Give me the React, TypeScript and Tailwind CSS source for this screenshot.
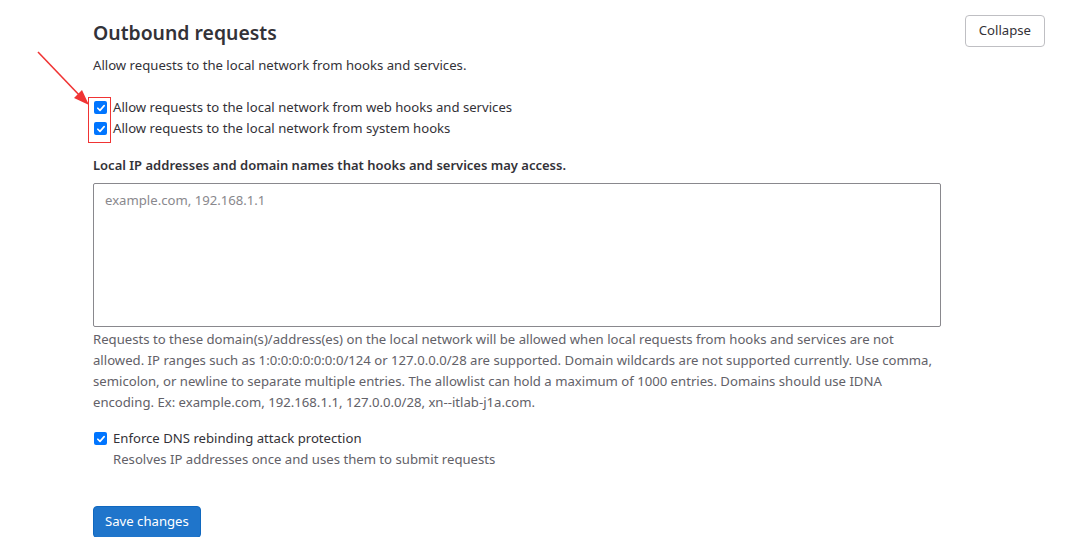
import React from "react";

const font = { fontFamily: '"Noto Sans", "Open Sans", sans-serif' };

function Check({ className = "" }: { className?: string }) {
  return (
    <span className={"inline-flex h-[13px] w-[13px] shrink-0 items-center justify-center rounded-[2px] bg-[#0075ff] " + className}>
      <svg viewBox="0 0 12 12" className="h-[10px] w-[10px]" fill="none">
        <path d="M2.2 6.3 L4.8 8.8 L9.8 3.2" stroke="white" strokeWidth="2" strokeLinecap="round" strokeLinejoin="round" />
      </svg>
    </span>
  );
}

export default function App() {
  return (
    <div className="relative h-[537px] w-[1089px] overflow-hidden bg-white text-[13.15px] text-[#333238]" style={font}>
      {/* annotation arrow */}
      <svg className="pointer-events-none absolute left-0 top-0 z-10" width="120" height="120" viewBox="0 0 120 120">
        <line x1="38" y1="52" x2="82" y2="98" stroke="#f03434" strokeWidth="1.6" />
        <polygon points="89,105 74,98 82,90" fill="#f03434" />
      </svg>
      <div className="pointer-events-none absolute left-[88px] top-[97px] z-10 h-[46px] w-[23px] border border-[#f03434]" />

      <div className="pl-[93px] pr-[44px] pt-[15px]">
        <div className="flex items-start justify-between">
          <h2 className="mt-[6px] text-[19.4px] font-semibold leading-[24px] text-[#333238]">Outbound requests</h2>
          <button className="h-[32px] rounded-[4px] border border-[#bfbfc3] bg-white px-[13px] text-[13.15px] text-[#333238]">
            Collapse
          </button>
        </div>
        <p className="mt-[8px] leading-[20px]">Allow requests to the local network from hooks and services.</p>

        <div className="mt-[22px] flex flex-col">
          <label className="flex h-[21px] items-center gap-[6px] pl-[1px]">
            <Check />
            <span>Allow requests to the local network from web hooks and services</span>
          </label>
          <label className="flex h-[21px] items-center gap-[6px] pl-[1px]">
            <Check />
            <span>Allow requests to the local network from system hooks</span>
          </label>
        </div>

        <div className="mt-[16px] text-[13px] font-semibold leading-[20px]">
          Local IP addresses and domain names that hooks and services may access.
        </div>
        <div className="mt-[8px] h-[144px] w-[848px] rounded-[2px] border border-[#89888d] px-[11px] py-[6px] leading-[20px] text-[#89888d]">
          example.com, 192.168.1.1
        </div>
        <div className="mt-[2px] w-[848px] leading-[21px] text-[#626168]">
          <div className="whitespace-nowrap">Requests to these domain(s)/address(es) on the local network will be allowed when local requests from hooks and services are not</div>
          <div className="whitespace-nowrap">allowed. IP ranges such as 1:0:0:0:0:0:0:0/124 or 127.0.0.0/28 are supported. Domain wildcards are not supported currently. Use comma,</div>
          <div className="whitespace-nowrap">semicolon, or newline to separate multiple entries. The allowlist can hold a maximum of 1000 entries. Domains should use IDNA</div>
          <div className="whitespace-nowrap">encoding. Ex: example.com, 192.168.1.1, 127.0.0.0/28, xn--itlab-j1a.com.</div>
        </div>

        <label className="mt-[15px] flex h-[21px] items-center gap-[6px] pl-[1px]">
          <Check />
          <span>Enforce DNS rebinding attack protection</span>
        </label>
        <div className="pl-[20px] leading-[21px] text-[#626168]">Resolves IP addresses once and uses them to submit requests</div>

        <button className="mt-[36px] h-[32px] rounded-[4px] border border-[#1068bf] bg-[#1f75cb] px-[11px] text-[13.15px] text-white">
          Save changes
        </button>
      </div>
    </div>
  );
}
